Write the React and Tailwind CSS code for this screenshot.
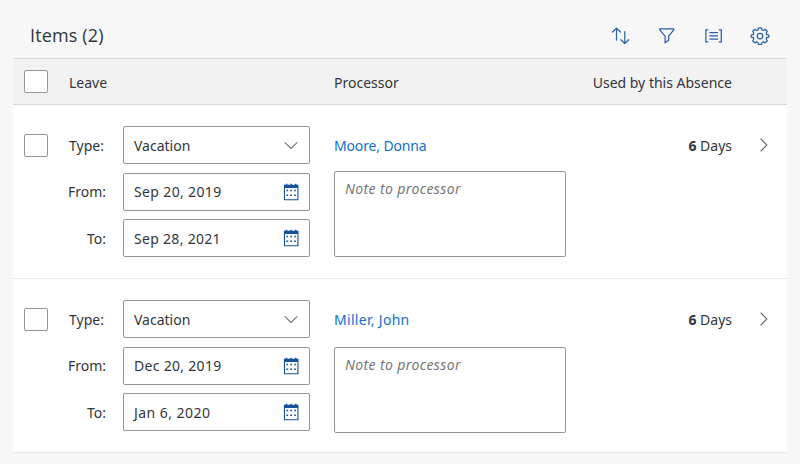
import React from "react";

const ITEMS = [
  {
    id: 1,
    type: "Vacation",
    from: { text: "Sep 20, 2019", fit: "tracking-[0.36px]" },
    to: { text: "Sep 28, 2021", fit: "tracking-[0.3px]" },
    processor: { text: "Moore, Donna", fit: "tracking-[-0.15px]" },
    noteGap: "mt-[7px]",
  },
  {
    id: 2,
    type: "Vacation",
    from: { text: "Dec 20, 2019", fit: "tracking-[0.3px]" },
    to: { text: "Jan 6, 2020", fit: "tracking-[0.45px]" },
    processor: { text: "Miller, John", fit: "tracking-[0.3px]" },
    noteGap: "mt-[9px]",
  },
];

function SortIcon() {
  return (
    <svg width="20" height="20" viewBox="0 0 20 20" fill="none" stroke="#2a62a8" strokeWidth="1.25" strokeLinecap="round" strokeLinejoin="round">
      <path d="M5.5 14V2.100M1.600 6l3.900-3.900L9.400 6M13.800 5.600v12M9.900 13.700l3.900 3.900 3.900-3.900" />
    </svg>
  );
}

function FilterIcon() {
  return (
    <svg width="20" height="20" viewBox="0 0 20 20" fill="none" stroke="#2a62a8" strokeWidth="1.25" strokeLinejoin="round">
      <path d="M2.700 2.800h14v1.100l-5 6.200v4.200L8.100 16.800V10.100L2.700 3.900z" />
    </svg>
  );
}

function GroupIcon() {
  return (
    <svg width="20" height="20" viewBox="0 0 20 20" fill="none" stroke="#2a62a8" strokeWidth="1.25">
      <path d="M4.300 3.900H1.900v11.900h2.400M14.900 3.900h2.400v11.900h-2.400M5.400 6.500h8.600M5.400 9.800h8.600M5.400 13.100h8.600" />
    </svg>
  );
}

function GearIcon() {
  return (
    <svg width="20" height="20" viewBox="0 0 20 20" fill="none" stroke="#2a62a8" strokeWidth="1.25" strokeLinejoin="round">
      <path d="M8.400 1.800h3.200l.5 2.200 1.100.5 2-1.200 2.100 2.200-1.200 2 .5 1.100 2.200.500v2l-2.200.500-.5 1.100 1.200 2-2.100 2.200-2-1.200-1.100.5-.5 2.200H8.400l-.5-2.200-1.100-.5-2 1.200-2.100-2.200 1.200-2-.5-1.100-2.200-.5v-2l2.200-.5.5-1.100-1.200-2 2.100-2.200 2 1.200 1.100-.5z" />
      <circle cx="10" cy="10.100" r="2.800" />
    </svg>
  );
}

function CalendarIcon() {
  return (
    <svg width="16" height="18" viewBox="0 0 16 18" fill="#14539a">
      <path d="M.9 1.700h1.900V.7h1.500v1h3.100V.7h1.500v1H12v-1h1.500v1h2v15.600H.9zM2 5v11.200h12.400V5z" fillRule="evenodd" />
      <path d="M3.400 6.800h1.700v1.500H3.400zM7.300 6.800H9v1.500H7.300zM11.200 6.800h1.700v1.500h-1.700zM3.400 11.600h1.700v1.500H3.400zM7.300 11.600H9v1.500H7.300zM11.200 11.600h1.700v1.500h-1.700z" />
    </svg>
  );
}

function Checkbox() {
  return <div role="checkbox" aria-checked="false" className="h-[23px] w-6 shrink-0 rounded-[2px] border border-[#94969a] bg-white" />;
}

function Field({ label, labelFit, children, icon }) {
  return (
    <div className="flex h-[38px] items-center">
      <div className={"flex w-[37px] justify-end whitespace-nowrap " + labelFit}>{label}</div>
      <div className="ml-[17px] flex h-[38px] w-[187px] items-center justify-between rounded-[2px] border border-[#94969a] bg-white pl-[10px] pr-[10px]">
        {children}
        {icon}
      </div>
    </div>
  );
}

function ItemRow({ item }) {
  return (
    <div className="flex h-[174px] border-b border-[#e8e8e8] bg-white pl-[11px] pt-[21px]">
      <div className="pt-2">
        <Checkbox />
      </div>
      <div className="ml-[21px] w-[241px]">
        <Field
          label="Type:"
          labelFit="pr-[2px] pt-[2px]"
          icon={
            <svg width="16" height="18" viewBox="0 0 16 18" fill="none" stroke="#707478" strokeWidth="1.1" strokeLinecap="round">
              <path d="M2 6.700l6 5.800 6-5.800" />
            </svg>
          }
        >
          <span className="pt-[2px]">{item.type}</span>
        </Field>
        <div className="mt-[9px]">
          <Field label="From:" labelFit="" icon={<CalendarIcon />}>
            <span className={item.from.fit}>{item.from.text}</span>
          </Field>
        </div>
        <div className="mt-2">
          <Field label="To:" labelFit="pt-[2px]" icon={<CalendarIcon />}>
            <span className={"pt-[2px] " + item.to.fit}>{item.to.text}</span>
          </Field>
        </div>
      </div>
      <div className="ml-[24px] w-[232px]">
        <div className={"flex h-[38px] items-center pt-[2px] text-[#1070ce] " + item.processor.fit}>{item.processor.text}</div>
        <div className={"h-[86px] rounded-[2px] border border-[#94969a] bg-white pl-[10px] pt-[7px] italic leading-5 tracking-[0.38px] text-[#74777a] " + item.noteGap}>
          Note to processor
        </div>
      </div>
      <div className="flex h-[38px] flex-1 items-center justify-end pr-[55px] pt-px">
        <span className="whitespace-pre">
          <b>6</b> Days
        </span>
      </div>
      <div className="-ml-[28px] flex h-[38px] w-[28px] items-center">
        <svg width="10" height="16" viewBox="0 0 10 16" fill="none" stroke="#606468" strokeWidth="1.1" strokeLinecap="round">
          <path d="M2 2l5.800 6L2 14" />
        </svg>
      </div>
    </div>
  );
}

export default function App() {
  return (
    <main className="h-[464px] w-[800px] overflow-hidden bg-[#f7f7f7] px-[13px] font-['Noto_Sans','Open_Sans',sans-serif] text-[14px] leading-5 text-[#32363a]">
      <header className="flex h-[58px] items-center justify-between pl-[17px] pr-[17px] pt-[13px]">
        <h1 className="pb-px font-['Open_Sans','Noto_Sans',sans-serif] text-[18px] leading-6 tracking-[0.15px]">Items (2)</h1>
        <div className="flex items-center gap-[26.500px]">
          <SortIcon />
          <FilterIcon />
          <GroupIcon />
          <GearIcon />
        </div>
      </header>
      <div className="flex h-[47px] items-center border-y border-[#d9d9d9] bg-[#f2f2f2] pl-[11px] pr-[55px]">
        <Checkbox />
        <span className="ml-[21px] w-[265px] pt-[2px]">Leave</span>
        <span className="pt-[2px]">Processor</span>
        <span className="ml-auto pt-[2px]">Used by this Absence</span>
      </div>
      {ITEMS.map((item) => (
        <ItemRow key={item.id} item={item} />
      ))}
    </main>
  );
}
